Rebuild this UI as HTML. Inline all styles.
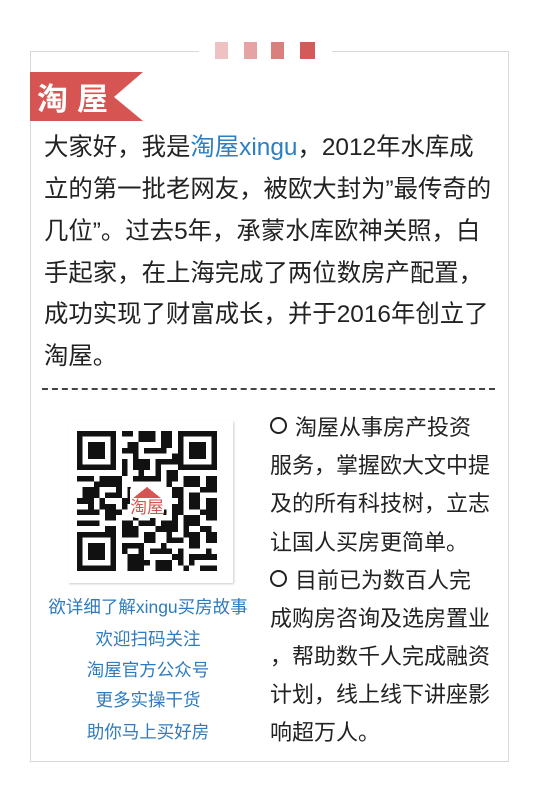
<!DOCTYPE html>
<html><head><meta charset="utf-8"><style>
body{margin:0;width:536px;height:800px;background:#fff;position:relative;overflow:hidden;font-family:"Liberation Sans","Noto Sans CJK SC",sans-serif;}
.box{position:absolute;left:30px;top:51px;width:479px;height:711px;border:1.5px solid #d8d8d8;box-sizing:border-box;}
.gap{position:absolute;left:199px;top:46px;width:133px;height:10px;background:#fff;}
.sq{position:absolute;top:42px;width:13px;height:17px;}
.ban{position:absolute;left:30px;top:72px;}
.bt{position:absolute;left:37px;top:75px;color:#fff;font-weight:bold;font-size:31px;letter-spacing:9px;line-height:44px;font-family:"Noto Sans CJK SC",sans-serif;}
.l{position:absolute;left:44px;font-size:24.4px;color:#222;white-space:nowrap;line-height:30px;}
.blue{color:#2b7fc4;}
.dash{position:absolute;left:42px;top:388px;width:453px;height:0;border-top:2px dashed #444;}
.card{position:absolute;left:68px;top:421px;width:165px;height:162px;background:#fff;box-shadow:1px 1px 2px #ccc;}
.c{position:absolute;left:30px;width:236px;text-align:center;font-size:17.5px;color:#2e7bbf;line-height:22px;white-space:nowrap;}
.r{position:absolute;left:270px;font-size:22px;color:#222;white-space:nowrap;line-height:26px;}
.o{display:inline-block;width:13px;height:13px;border:2px solid #222;border-radius:50%;margin-right:8px;vertical-align:1px;}
</style></head><body>
<div class="box"></div>
<div class="gap"></div>
<div class="sq" style="left:215px;background:#eec2c2"></div>
<div class="sq" style="left:244px;background:#e6a3a3"></div>
<div class="sq" style="left:271px;background:#dc7e7e"></div>
<div class="sq" style="left:300px;width:15px;background:#d45a5a"></div>
<svg class="ban" width="114" height="50"><polygon points="0,0 113,0 84,25 113,49 0,49" fill="#d65451"/></svg>
<div class="bt">淘屋</div>

<div class="l" style="top:133px">大家好，我是<span class="blue">淘屋xingu</span>，2012年水库成</div>
<div class="l" style="top:175px">立的第一批老网友，被欧大封为”最传奇的</div>
<div class="l" style="top:217px">几位”。过去5年，承蒙水库欧神关照，白</div>
<div class="l" style="top:259px">手起家，在上海完成了两位数房产配置，</div>
<div class="l" style="top:300px">成功实现了财富成长，并于2016年创立了</div>
<div class="l" style="top:342px">淘屋。</div>
<div class="dash"></div>

<div class="card"></div>
<svg style="position:absolute;left:77px;top:430px" width="140" height="142" viewBox="0 0 25 25" shape-rendering="crispEdges">
<g fill="#111">
<rect x="0" y="0" width="7" height="7"/><rect x="18" y="0" width="7" height="7"/><rect x="0" y="18" width="7" height="7"/>
<path d="M8 0h2v1h-2zM11 0h3v2h-3zM15 0h2v3h-2zM9 2h2v2h-2zM12 3h4v1h-4zM8 5h1v3h-1zM10 5h3v2h-3zM14 5h3v1h-3zM16 7h2v2h-2zM0 8h3v1h-3zM4 8h4v2h-4zM10 8h5v1h-5zM19 8h3v2h-3zM23 8h2v3h-2zM1 10h2v3h-2zM5 11h3v1h-3zM17 10h2v2h-2zM20 11h2v3h-2zM0 14h4v1h-4zM5 13h2v3h-2zM17 13h2v2h-2zM23 12h2v4h-2zM1 16h3v1h-3zM8 16h2v3h-2zM11 16h3v1h-3zM15 16h3v2h-3zM19 16h3v1h-3zM12 18h2v2h-2zM16 19h3v1h-3zM20 18h2v3h-2zM23 18h2v2h-2zM8 20h3v1h-3zM13 21h4v1h-4zM18 21h1v3h-1zM9 22h3v3h-3zM14 23h3v2h-3zM20 22h5v1h-5zM22 24h3v1h-3zM19 24h1v1h-1zM3 11h1v1h-1zM6 17h1v1h-1zM9 10h1v3h-1zM15 14h1v1h-1zM11 14h1v1h-1z
M8 3h1v1h-1zM13 1h1v1h-1zM17 4h1v2h-1zM10 4h1v1h-1zM14 6h1v2h-1zM11 7h1v1h-1zM3 9h1v2h-1zM0 12h1v1h-1zM4 12h1v2h-1zM7 9h1v2h-1zM8 12h1v2h-1zM2 13h1v1h-1zM16 9h1v1h-1zM18 12h1v1h-1zM22 10h1v1h-1zM19 15h3v1h-3zM22 14h1v1h-1zM7 14h1v1h-1zM0 16h1v1h-1zM5 17h1v1h-1zM10 17h1v2h-1zM14 17h1v1h-1zM16 18h1v1h-1zM19 17h1v2h-1zM22 17h2v1h-2zM8 21h1v1h-1zM11 20h1v2h-1zM12 23h1v1h-1zM15 20h1v1h-1zM17 22h1v1h-1zM20 23h1v1h-1zM23 21h1v1h-1zM13 15h1v1h-1zM10 15h1v1h-1zM17 15h1v1h-1z"/>
</g>
<g fill="#fff">
<rect x="1" y="1" width="5" height="5"/><rect x="19" y="1" width="5" height="5"/><rect x="1" y="19" width="5" height="5"/>
</g>
<g fill="#111"><rect x="2" y="2" width="3" height="3"/><rect x="20" y="2" width="3" height="3"/><rect x="2" y="20" width="3" height="3"/></g>
<rect x="9.5" y="9.5" width="6" height="6" fill="#fff" rx="1"/>
<polygon points="10,12 12.5,10 15,12" fill="#d65451"/>
<text x="12.5" y="14.6" font-size="3" fill="#d65451" text-anchor="middle" font-family="Noto Sans CJK SC">淘屋</text>
</svg>

<div class="c" style="top:596px">欲详细了解xingu买房故事</div>
<div class="c" style="top:628px">欢迎扫码关注</div>
<div class="c" style="top:659px">淘屋官方公众号</div>
<div class="c" style="top:689px">更多实操干货</div>
<div class="c" style="top:721px">助你马上买好房</div>

<div class="r" style="top:415px"><span class="o"></span>淘屋从事房产投资</div>
<div class="r" style="top:453px">服务，掌握欧大文中提</div>
<div class="r" style="top:491px">及的所有科技树，立志</div>
<div class="r" style="top:530px">让国人买房更简单。</div>
<div class="r" style="top:568px"><span class="o"></span>目前已为数百人完</div>
<div class="r" style="top:606px">成购房咨询及选房置业</div>
<div class="r" style="top:644px">，帮助数千人完成融资</div>
<div class="r" style="top:682px">计划，线上线下讲座影</div>
<div class="r" style="top:720px">响超万人。</div>
</body></html>
